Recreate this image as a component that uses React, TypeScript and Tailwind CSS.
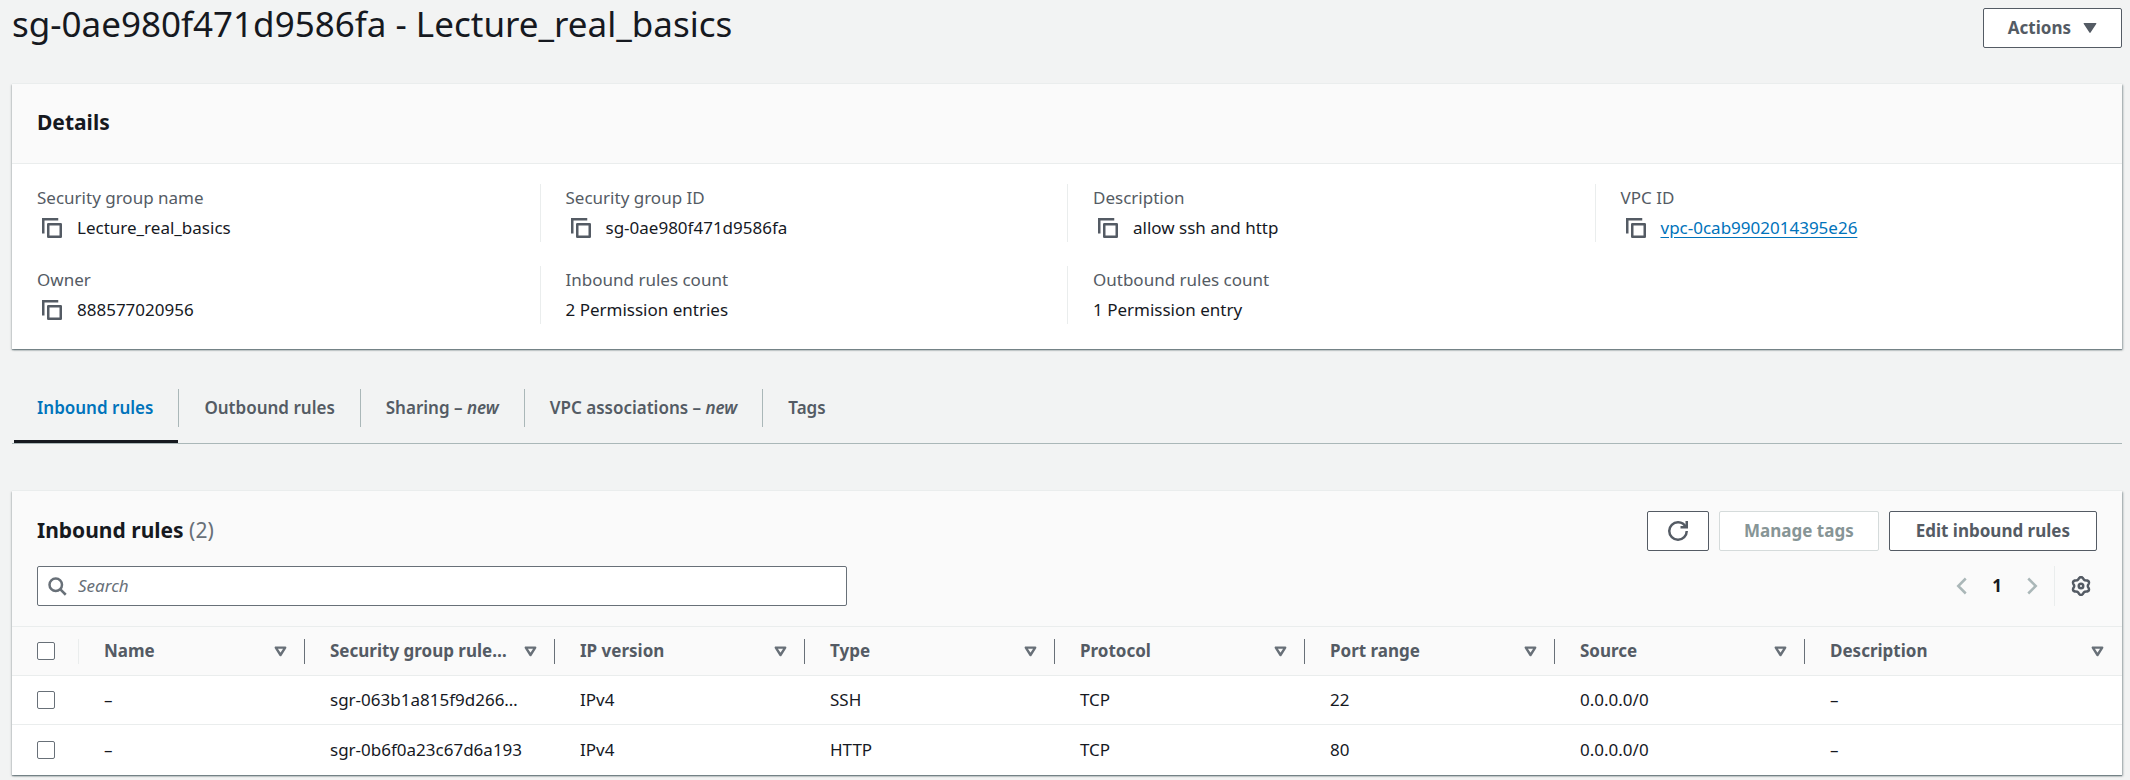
import { useState } from "react";
import type { ReactNode } from "react";

function CopyIcon() {
  return (
    <svg viewBox="0 0 16 16" className="h-5 w-5 shrink-0 fill-none stroke-[#545b64] stroke-2" aria-hidden="true">
      <path d="M1 12.4V1h12" />
      <path d="M5 5h10v10H5z" strokeLinejoin="round" />
    </svg>
  );
}

function RefreshIcon() {
  return (
    <svg viewBox="0 0 16 16" className="h-5 w-5 fill-none stroke-[#545b64] stroke-2" aria-hidden="true">
      <path d="M10 5h5V0" />
      <path d="M15 8a6.96 6.96 0 0 1-7 7 6.96 6.96 0 0 1-7-7 6.96 6.96 0 0 1 7-7 6.87 6.87 0 0 1 6.3 4" />
    </svg>
  );
}

function SearchIcon() {
  return (
    <svg viewBox="0 0 16 16" className="h-5 w-5 shrink-0 fill-none stroke-[#687078] stroke-2" aria-hidden="true">
      <circle cx="7" cy="7" r="5" />
      <path d="M15 15l-4.5-4.5" />
    </svg>
  );
}

// Six-lobed outline traced around the centre of a 16-unit box.
const gearOutline =
  Array.from({ length: 96 }, (_, i) => {
    const a = (i / 96) * Math.PI * 2;
    const r = 6.3 - 0.85 * Math.cos(6 * a);
    return `${i === 0 ? "M" : "L"}${(8 + r * Math.cos(a)).toFixed(2)} ${(8 + r * Math.sin(a)).toFixed(2)}`;
  }).join("") + "Z";

function GearIcon() {
  return (
    <svg viewBox="0 0 16 16" className="h-5 w-5 fill-none stroke-[#545b64] stroke-2" aria-hidden="true">
      <path d={gearOutline} strokeLinejoin="round" />
      <circle cx="8" cy="8" r="1.8" />
    </svg>
  );
}

function Chevron({ flip = false }: { flip?: boolean }) {
  return (
    <svg viewBox="0 0 16 16" className="h-5 w-5 fill-none stroke-[#aab7b8] stroke-2" aria-hidden="true">
      <path d={flip ? "M5 2l6 6-6 6" : "M11 2L5 8l6 6"} />
    </svg>
  );
}

function SortIcon() {
  return (
    <svg viewBox="0 0 13 11" className="h-[11px] w-[13px] shrink-0 fill-none stroke-[#687078] stroke-[2.4]" aria-hidden="true">
      <path d="M1.8 1.6h9.4L6.5 9z" strokeLinejoin="round" />
    </svg>
  );
}

type Detail = { label: string; value: string; copy?: boolean; link?: boolean };

const details: Detail[] = [
  { label: "Security group name", value: "Lecture_real_basics", copy: true },
  { label: "Security group ID", value: "sg-0ae980f471d9586fa", copy: true },
  { label: "Description", value: "allow ssh and http", copy: true },
  { label: "VPC ID", value: "vpc-0cab9902014395e26", copy: true, link: true },
  { label: "Owner", value: "888577020956", copy: true },
  { label: "Inbound rules count", value: "2 Permission entries" },
  { label: "Outbound rules count", value: "1 Permission entry" },
];

const tabs: { id: string; label: string; isNew?: boolean }[] = [
  { id: "inbound", label: "Inbound rules" },
  { id: "outbound", label: "Outbound rules" },
  { id: "sharing", label: "Sharing", isNew: true },
  { id: "vpc", label: "VPC associations", isNew: true },
  { id: "tags", label: "Tags" },
];

const columns = [
  "Name",
  "Security group rule…",
  "IP version",
  "Type",
  "Protocol",
  "Port range",
  "Source",
  "Description",
];

const rules = [
  ["–", "sgr-063b1a815f9d266…", "IPv4", "SSH", "TCP", "22", "0.0.0.0/0", "–"],
  ["–", "sgr-0b6f0a23c67d6a193", "IPv4", "HTTP", "TCP", "80", "0.0.0.0/0", "–"],
];

const checkboxClass =
  "block h-[18px] w-[18px] appearance-none rounded-[2px] border border-[#687078] bg-white checked:bg-[#0073bb]";

function Panel({ children }: { children: ReactNode }) {
  return (
    <section className="bg-white shadow-[0_-1px_0_0_#eaeded,0_1px_1px_0_rgba(0,28,36,0.3),1px_1px_2px_0_rgba(0,28,36,0.35),-1px_1px_2px_0_rgba(0,28,36,0.15)]">
      {children}
    </section>
  );
}

export default function App() {
  const [active, setActive] = useState("inbound");

  return (
    <main className="min-h-screen bg-[#f2f3f3] pt-1 pr-2 pb-1 pl-3 font-['Noto_Sans','Open_Sans',sans-serif] text-[17px] leading-7 text-[#16191f]">
      <header className="flex items-start justify-between">
        <h1 className="text-[35px] leading-10">sg-0ae980f471d9586fa - Lecture_real_basics</h1>
        <button
          type="button"
          className="mt-1 flex h-10 items-center gap-3 rounded-[2px] border border-[#545b64] bg-white px-6 font-bold text-[#545b64]"
        >
          Actions
          <svg viewBox="0 0 14 12" className="h-3 w-[14px] fill-[#545b64]" aria-hidden="true">
            <path d="M1.4 1h11.2c.7 0 1 .6.6 1.1L7.6 10.5c-.3.5-.9.5-1.2 0L.8 2.1C.4 1.6.7 1 1.4 1z" />
          </svg>
        </button>
      </header>

      <div className="mt-9">
        <Panel>
          <div className="border-b border-[#eaeded] bg-[#fafafa] px-[25px] pt-6 pb-[27px]">
            <h2 className="text-[21px] leading-7 font-bold">Details</h2>
          </div>
          <dl className="grid grid-cols-4 gap-y-6 pt-5 pb-[25px]">
            {details.map((d, i) => (
              <div
                key={d.label}
                className={i % 4 === 0 ? "px-[25px]" : "border-l border-[#eaeded] px-[25px]"}
              >
                <dt className="text-[#545b64]">{d.label}</dt>
                <dd className="mt-0.5 flex items-center">
                  {d.copy && (
                    <button type="button" aria-label={`Copy ${d.label}`} className="mr-[15px] ml-[5px]">
                      <CopyIcon />
                    </button>
                  )}
                  {d.link ? (
                    <a href="#vpc" className="text-[#0073bb] underline underline-offset-3">
                      {d.value}
                    </a>
                  ) : (
                    <span>{d.value}</span>
                  )}
                </dd>
              </div>
            ))}
          </dl>
        </Panel>
      </div>

      <div role="tablist" className="mt-10 flex border-b border-[#aab7b8]">
        {tabs.map((t, i) => (
          <button
            key={t.id}
            type="button"
            role="tab"
            aria-selected={t.id === active}
            onClick={() => setActive(t.id)}
            className="flex flex-col font-semibold text-[#545b64] aria-selected:text-[#0073bb]"
          >
            <span
              className={
                i === tabs.length - 1
                  ? "px-[25px] py-[5px]"
                  : "border-r border-[#aab7b8] px-[25px] py-[5px]"
              }
            >
              {t.label}
              {t.isNew && (
                <>
                  {" – "}
                  <em>new</em>
                </>
              )}
            </span>
            <span
              className={
                t.id === active ? "mt-[13px] mr-px ml-0.5 h-[3px] self-stretch bg-[#16191f]" : "mt-[13px] h-[3px]"
              }
            />
          </button>
        ))}
      </div>

      <div className="mt-[47px]">
        <Panel>
          <div className="bg-[#fafafa] px-[25px] py-5">
            <div className="flex items-start justify-between">
              <h2 className="text-[21px] leading-[38px] font-bold">
                Inbound rules <span className="font-normal text-[#687078]">(2)</span>
              </h2>
              <div className="flex gap-[10px]">
                <button
                  type="button"
                  aria-label="Refresh"
                  className="flex h-10 items-center rounded-[2px] border border-[#545b64] bg-white px-5"
                >
                  <RefreshIcon />
                </button>
                <button
                  type="button"
                  disabled
                  className="h-10 rounded-[2px] border border-[#d5dbdb] bg-white px-6 font-bold text-[#879596]"
                >
                  Manage tags
                </button>
                <button
                  type="button"
                  className="h-10 rounded-[2px] border border-[#545b64] bg-white px-[26px] font-bold text-[#545b64]"
                >
                  Edit inbound rules
                </button>
              </div>
            </div>
            <div className="mt-[15px] flex items-center justify-between">
              <label className="flex h-10 w-2/5 max-w-[810px] items-center gap-[11px] rounded-[2px] border border-[#687078] bg-white px-[9px]">
                <SearchIcon />
                <input
                  type="text"
                  placeholder="Search"
                  aria-label="Search"
                  className="min-w-0 flex-1 bg-transparent outline-none placeholder:text-[#687078] placeholder:italic"
                />
              </label>
              <div className="flex items-center">
                <button type="button" disabled aria-label="Previous page">
                  <Chevron />
                </button>
                <span className="w-[50px] text-center font-bold">1</span>
                <button type="button" disabled aria-label="Next page">
                  <Chevron flip />
                </button>
                <span className="ml-3 h-10 border-l border-[#eaeded]" />
                <button type="button" aria-label="Preferences" className="mr-1.5 ml-4">
                  <GearIcon />
                </button>
              </div>
            </div>
          </div>

          <table className="w-full table-fixed border-collapse text-left whitespace-nowrap">
            <colgroup>
              <col className="w-[67px]" />
              <col className="w-[226px]" />
              <col className="w-[250px]" />
              <col className="w-[250px]" />
              <col className="w-[250px]" />
              <col className="w-[250px]" />
              <col className="w-[250px]" />
              <col className="w-[250px]" />
              <col />
            </colgroup>
            <thead>
              <tr className="h-[49px] border-y border-[#eaeded] bg-[#fafafa] text-[#545b64]">
                <th className="p-0">
                  <div className="flex h-[25px] items-center border-r border-[#eaeded] pl-[25px]">
                    <input type="checkbox" aria-label="Select all rules" className={checkboxClass} />
                  </div>
                </th>
                {columns.map((c, i) => (
                  <th key={c} className="p-0 font-bold">
                    <div
                      className={
                        i === columns.length - 1
                          ? "flex h-[25px] items-center justify-between pr-[18px] pl-[25px]"
                          : "flex h-[25px] items-center justify-between border-r border-[#687078] pr-[17px] pl-[25px]"
                      }
                    >
                      {c}
                      <SortIcon />
                    </div>
                  </th>
                ))}
              </tr>
            </thead>
            <tbody>
              {rules.map((r) => (
                <tr key={r[1]} className="h-[49px] border-b border-[#eaeded] last:h-[50px] last:border-b-0">
                  <td className="p-0 pl-[25px]">
                    <input type="checkbox" aria-label={`Select ${r[1]}`} className={checkboxClass} />
                  </td>
                  {r.map((v, i) => (
                    <td key={i} className="p-0 pl-[25px]">
                      {v}
                    </td>
                  ))}
                </tr>
              ))}
            </tbody>
          </table>
        </Panel>
      </div>
    </main>
  );
}
